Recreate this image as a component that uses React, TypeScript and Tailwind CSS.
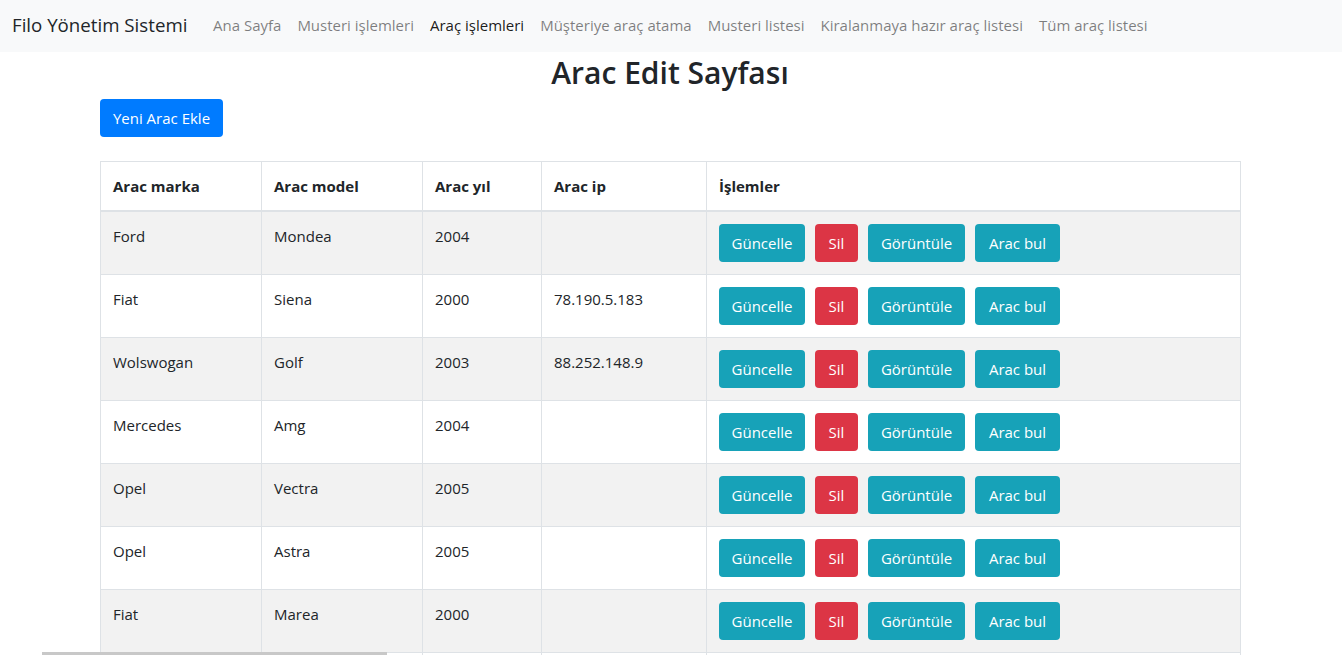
import React from "react";

const navLinks = [
  { label: "Ana Sayfa", active: false },
  { label: "Musteri işlemleri", active: false },
  { label: "Araç işlemleri", active: true },
  { label: "Müşteriye araç atama", active: false },
  { label: "Musteri listesi", active: false },
  { label: "Kiralanmaya hazır araç listesi", active: false },
  { label: "Tüm araç listesi", active: false },
];

const cars = [
  { marka: "Ford", model: "Mondea", yil: "2004", ip: "" },
  { marka: "Fiat", model: "Siena", yil: "2000", ip: "78.190.5.183" },
  { marka: "Wolswogan", model: "Golf", yil: "2003", ip: "88.252.148.9" },
  { marka: "Mercedes", model: "Amg", yil: "2004", ip: "" },
  { marka: "Opel", model: "Vectra", yil: "2005", ip: "" },
  { marka: "Opel", model: "Astra", yil: "2005", ip: "" },
  { marka: "Fiat", model: "Marea", yil: "2000", ip: "" },
];

const Navbar = () => (
  <nav className="h-[52px] bg-[#f8f9fa] flex items-center px-3 pb-[2px]">
    <span className="w-[175px] text-[18.7px] text-[#212529] mr-[18px] whitespace-nowrap">
      Filo Yönetim Sistemi
    </span>
    <ul className="flex items-center">
      {navLinks.map((l) => (
        <li key={l.label}>
          <a
            href="#"
            className={`px-2 text-[15px] whitespace-nowrap ${
              l.active ? "text-[rgba(0,0,0,0.9)]" : "text-[rgba(0,0,0,0.5)]"
            }`}
          >
            {l.label}
          </a>
        </li>
      ))}
    </ul>
  </nav>
);

const ActionButtons = () => (
  <div className="flex gap-[10px]">
    <button className="w-[86px] h-[38px] rounded bg-[#17a2b8] text-white text-[15px]">
      Güncelle
    </button>
    <button className="w-[43px] h-[38px] rounded bg-[#dc3545] text-white text-[15px]">
      Sil
    </button>
    <button className="w-[97px] h-[38px] rounded bg-[#17a2b8] text-white text-[15px]">
      Görüntüle
    </button>
    <button className="w-[85px] h-[38px] rounded bg-[#17a2b8] text-white text-[15px]">
      Arac bul
    </button>
  </div>
);

export default function App() {
  return (
    <div
      className="min-h-screen bg-white text-[#212529]"
      style={{ fontFamily: '"Open Sans", "Noto Sans", sans-serif' }}
    >
      <Navbar />
      <div className="w-[1140px] ml-[100px] pt-[2px]">
        <h2 className="text-[30px] font-semibold leading-[38px] text-center mb-[7px]">
          Arac Edit Sayfası
        </h2>
        <button className="w-[123px] h-[38px] rounded bg-[#007bff] text-white text-[15px]">
          Yeni Arac Ekle
        </button>
        <table className="mt-6 w-[1140px] table-fixed border-collapse text-[15px]">
          <thead>
            <tr>
              {[
                ["Arac marka", "w-[161px]"],
                ["Arac model", "w-[161px]"],
                ["Arac yıl", "w-[119px]"],
                ["Arac ip", "w-[165px]"],
                ["İşlemler", "w-[534px]"],
              ].map(([h, w]) => (
                <th
                  key={h}
                  className={`${w} text-left font-bold px-3 py-3 leading-6 border border-[#dee2e6] border-b-2`}
                >
                  {h}
                </th>
              ))}
            </tr>
          </thead>
          <tbody>
            {cars.map((c, i) => (
              <tr key={i} className={i % 2 === 0 ? "bg-[#f2f2f2]" : "bg-white"}>
                <td className="align-top p-3 leading-6 border border-[#dee2e6]">{c.marka}</td>
                <td className="align-top p-3 leading-6 border border-[#dee2e6]">{c.model}</td>
                <td className="align-top p-3 leading-6 border border-[#dee2e6]">{c.yil}</td>
                <td className="align-top p-3 leading-6 border border-[#dee2e6]">{c.ip}</td>
                <td className="align-top p-3 border border-[#dee2e6]">
                  <ActionButtons />
                </td>
              </tr>
            ))}
            <tr className="bg-white h-[63px]">
              <td className="border border-[#dee2e6]"></td>
              <td className="border border-[#dee2e6]"></td>
              <td className="border border-[#dee2e6]"></td>
              <td className="border border-[#dee2e6]"></td>
              <td className="border border-[#dee2e6]"></td>
            </tr>
          </tbody>
        </table>
      </div>
      <div className="fixed bottom-0 left-[42px] w-[345px] h-[3px] bg-[#c8c8c8]" />
    </div>
  );
}
